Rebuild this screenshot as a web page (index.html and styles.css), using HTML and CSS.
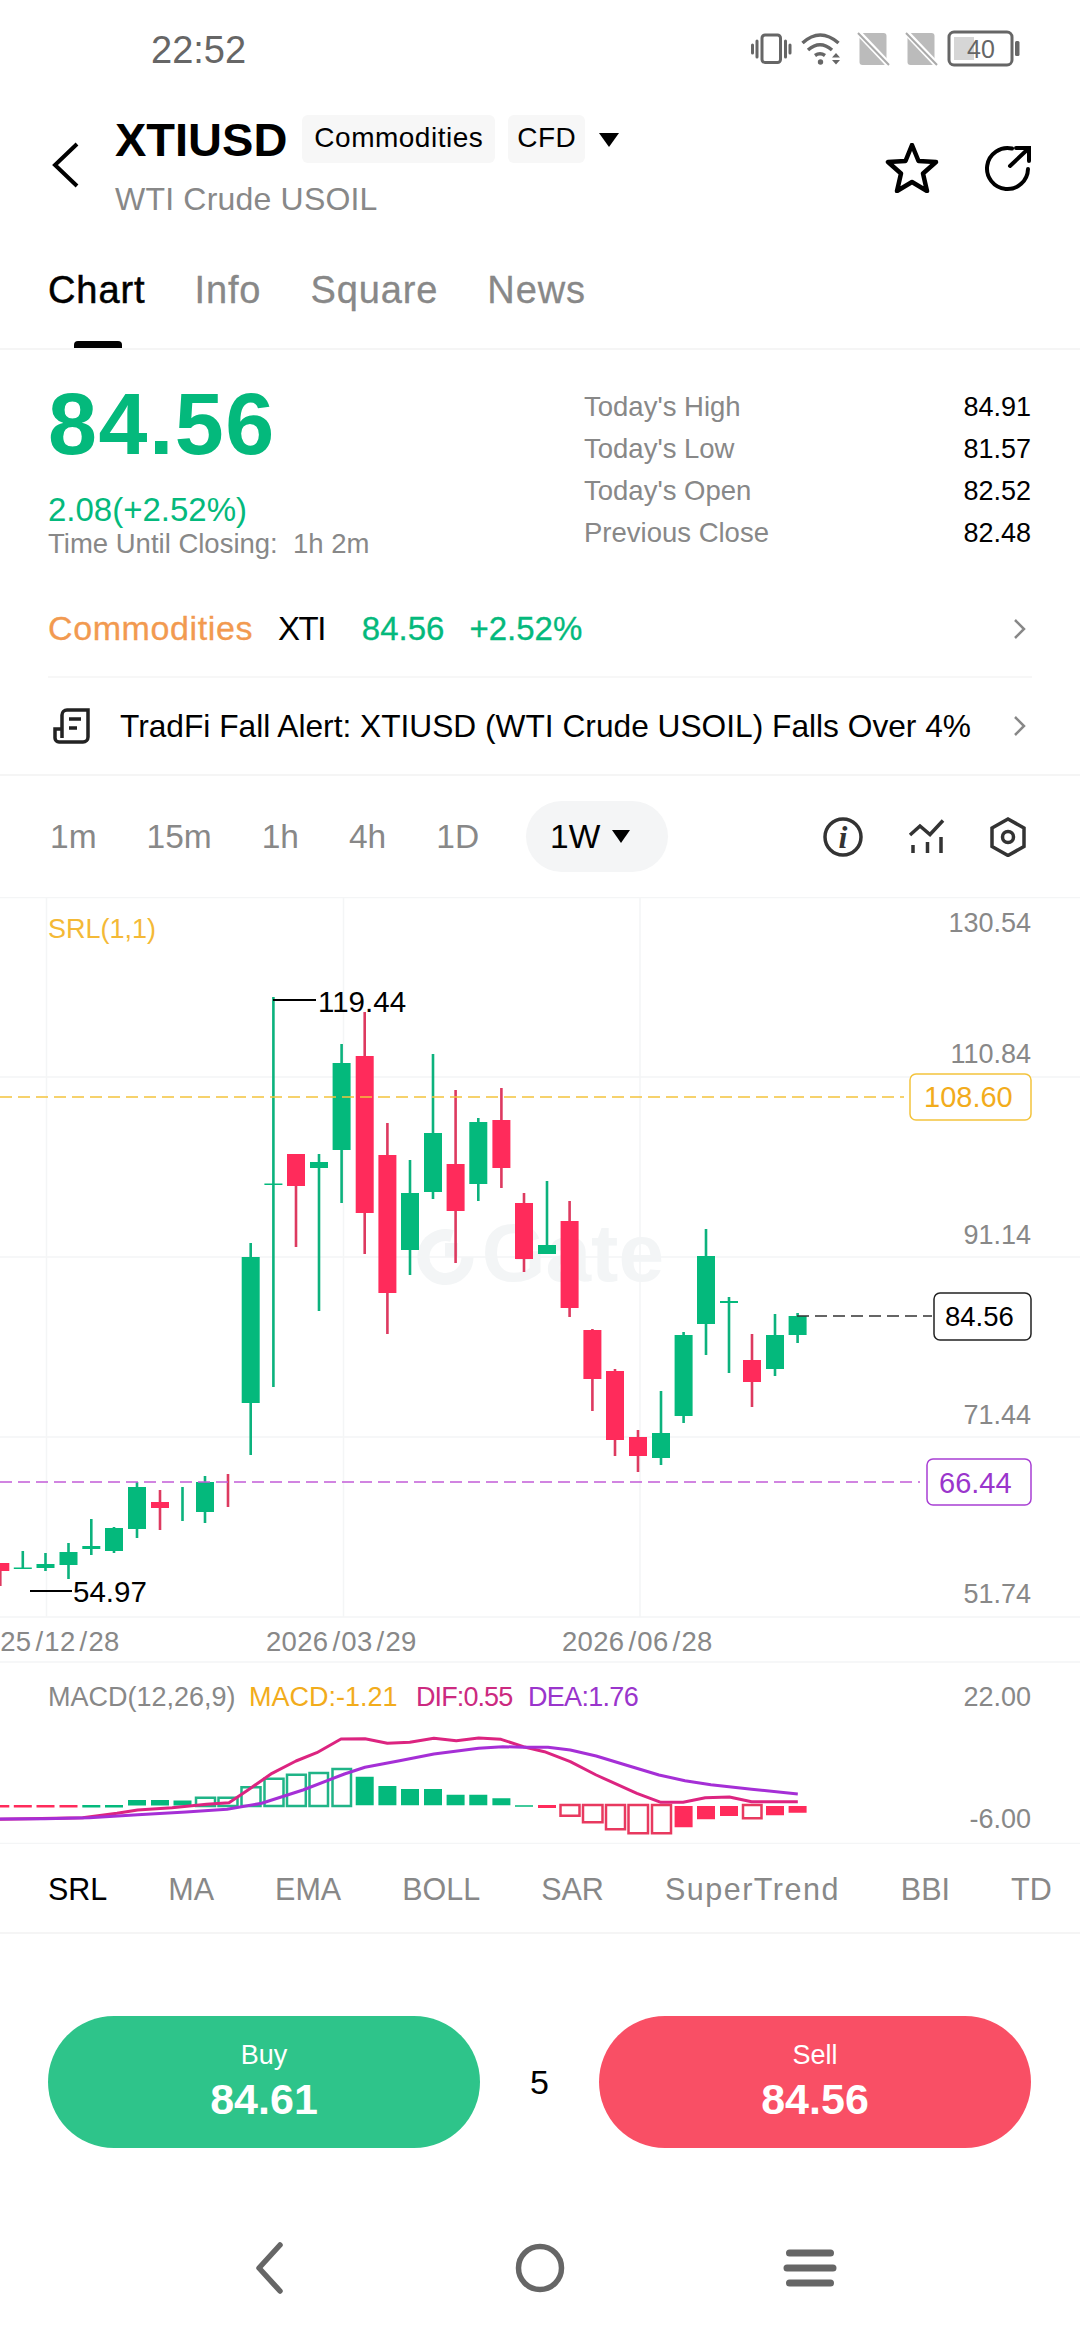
FILE: index.html
```html
<!DOCTYPE html>
<html lang="en">
  <head>
    <meta charset="UTF-8" />
    <meta name="viewport" content="width=device-width, initial-scale=1.0" />
    <title>XTIUSD</title>
    <link rel="stylesheet" href="styles.css">
  </head>
  <body>
    <div class="app">
      <!-- status bar -->
      <div class="statusBar">
        <span class="clock">22:52</span>
        <svg class="statusIcons" width="300" height="60" viewBox="0 0 300 60">
          <rect class="ic" x="22" y="15" width="18.500" height="27.500" rx="3" />
          <path class="ic" d="M17 21V37M12.500 25V33M45.500 21V37M50 25V33" />
          <path class="wifi" d="M62.500 23Q80 7 98.500 23M68 30Q80 19.500 92 30M75 35.500Q80 32 85 35.500" />
          <circle class="fillDark" cx="80.500" cy="42" r="2.700" />
          <path class="fillDark" d="M96 33L92 37.500H100ZM92 40H100L96 44.500Z" />
          <rect class="sim" x="119.500" y="13" width="27" height="32" rx="3" />
          <path class="simCut" d="M114 8L150 46" />
          <path class="simLine" d="M118 13L149 45" />
          <rect class="sim" x="167.500" y="13" width="27" height="32" rx="3" />
          <path class="simCut" d="M162 8L198 46" />
          <path class="simLine" d="M166 13L197 45" />
          <rect class="batBody" x="209" y="12" width="63" height="33" rx="5" />
          <rect class="batFill" x="214" y="17" width="20" height="23" />
          <rect class="fillDark" x="275" y="21" width="4.500" height="15" rx="1.500" />
          <text class="batText" x="241" y="37.500">40</text>
        </svg>
      </div>

      <!-- header -->
      <div class="header">
        <svg class="backIcon" width="30" height="48" viewBox="0 0 30 48">
          <path d="M27 3L5 24L27 45" />
        </svg>
        <div class="titleBlock">
          <div class="titleRow">
            <span class="symbol">XTIUSD</span>
            <span class="chip">Commodities</span>
            <span class="chip chipShort">CFD</span>
            <span class="caret"></span>
          </div>
          <div class="symbolName">WTI Crude USOIL</div>
        </div>
        <svg class="starIcon" width="54" height="50" viewBox="0 0 54 50">
          <path d="M27 2L33.500 18L51 19L38 30.500L42 48L27 39L12 48L16 30.500L3 19L20.500 18Z" />
        </svg>
        <svg class="shareIcon" width="52" height="52" viewBox="982 142 52 52">
          <path d="M1012 147.500A20.500 20.500 0 1 0 1028 168M1010 165L1028 148M1016 147H1029V160" />
        </svg>
      </div>

      <!-- tabs -->
      <div class="tabs">
        <div class="tab active">Chart</div>
        <div class="tab">Info</div>
        <div class="tab">Square</div>
        <div class="tab">News</div>
      </div>

      <!-- quote -->
      <div class="quote">
        <div class="quoteLeft">
          <div class="price">84.56</div>
          <div class="change">2.08(+2.52%)</div>
          <div class="closing">Time Until Closing:&nbsp; 1h 2m</div>
        </div>
        <div class="stats">
          <div class="statRow"><span>Today's High</span><b>84.91</b></div>
          <div class="statRow"><span>Today's Low</span><b>81.57</b></div>
          <div class="statRow"><span>Today's Open</span><b>82.52</b></div>
          <div class="statRow"><span>Previous Close</span><b>82.48</b></div>
        </div>
      </div>

      <div class="sectorRow">
        <span class="sector">Commodities</span>
        <span class="sectorCode">XTI</span>
        <span class="sectorPrice">84.56</span>
        <span class="sectorPct">+2.52%</span>
        <svg class="chevron" width="15" height="22" viewBox="0 0 15 22"><path d="M3 2L12 11L3 20" /></svg>
      </div>

      <div class="newsRow">
        <svg class="newsIcon" width="44" height="42" viewBox="50 705 44 42">
          <path d="M62 738V715a5 5 0 0 1 5-5H88V737a5 5 0 0 1-5 5H59a4 4 0 0 1-4-4V729H62M69 719H81M69 728H77" />
        </svg>
        <span class="newsText">TradFi Fall Alert: XTIUSD (WTI Crude USOIL) Falls Over 4%</span>
        <svg class="chevron" width="15" height="22" viewBox="0 0 15 22"><path d="M3 2L12 11L3 20" /></svg>
      </div>

      <!-- time frames -->
      <div class="frames">
        <span class="frame">1m</span>
        <span class="frame">15m</span>
        <span class="frame">1h</span>
        <span class="frame">4h</span>
        <span class="frame">1D</span>
        <span class="framePill">1W<span class="caret small"></span></span>
        <div class="frameIcons">
          <svg width="40" height="40" viewBox="820 816 40 40">
            <circle class="tool" cx="840" cy="836" r="18" />
            <text class="infoI" x="840" y="847">i</text>
          </svg>
          <svg width="37" height="40" viewBox="905 816 37 40">
            <path class="tool" d="M907 834L917 825L927 833.500L940 819.500M910 844V852M924.500 841V852M938 836V852" />
          </svg>
          <svg width="36" height="40" viewBox="990 816 36 40">
            <path class="tool" d="M1008 818L1024 827V845.500L1008 854.500L992 845.500V827Z" />
            <circle class="tool" cx="1008" cy="836" r="5.500" />
          </svg>
        </div>
      </div>

      <!-- chart canvas, viewBox uses page coordinates -->
      <svg class="chart" width="1080" height="947" viewBox="0 897 1080 947">
        <path class="grid" d="M0 897.500H1080M0 1077H1080M0 1257H1080M0 1437H1080M0 1617H1080M0 1662H1080M0 1843.500H1080M46.500 897V1617M343.500 897V1617M640 897V1617" />

        <path class="markRing" d="M452 1236A22 22 0 1 0 467.500 1257" />
        <path class="markDot" d="M445 1243H458V1257H445Z" />
        <text class="mark" x="664" y="1281">Gate</text>

        <path class="wick up" d="M22.800 1551V1569M45.500 1553V1571M68.500 1543V1579M91.300 1519V1555M114 1527V1553M137 1482V1538M182.500 1487V1521M205 1476V1523M250.700 1243V1455M273.400 997V1387M319 1154V1311M341.600 1044V1203M410 1160V1275M433 1054V1199M478.300 1118V1201M547 1181V1254M661 1391V1465M683.600 1332V1423M706 1229V1355M729 1297V1373M775 1314V1376M797.600 1313V1343" />
        <path class="body up" d="M22.800 1567.500V1569M45.500 1564V1568M68.500 1552V1565M91.300 1546V1549M114 1528V1551M137 1487V1529M205 1482V1512M250.700 1257V1403M273.400 1183.500V1185M319 1162V1168M341.600 1063V1150M410 1193V1250M433 1133V1192M478.300 1122V1184M547 1245V1254M661 1433V1458M683.600 1335V1416M706 1256V1324M729 1301V1303M775 1335V1369M797.600 1316V1335" />
        <path class="wick down" d="M0.300 1563V1586M160 1490V1530M228 1474V1507M296 1154V1247M364.700 1012V1254M387.400 1123V1334M455.600 1090V1263M501.400 1088V1188M524 1193V1272M569.600 1201V1317M592.400 1329V1411M615 1369V1456M638 1430V1472M752 1334V1407" />
        <path class="body down" d="M0.300 1563V1571M160 1502V1508M296 1154V1186M364.700 1056V1213M387.400 1155V1293M455.600 1164V1211M501.400 1120V1168M524 1203V1259M569.600 1221V1308M592.400 1330V1379M615 1371V1440M638 1437V1456M752 1360V1382" />

        <path class="dash yellow" d="M0 1097H904" />
        <path class="dash purple" d="M0 1482H920" />
        <path class="dash black" d="M797 1316H932" />

        <path class="leader" d="M273 1000H316M30 1591H72" />
        <text class="hiLo" x="318" y="1012">119.44</text>
        <text class="hiLo" x="73" y="1602">54.97</text>
        <text class="srl" x="48" y="938">SRL(1,1)</text>

        <text class="axis" x="1031" y="932">130.54</text>
        <text class="axis" x="1031" y="1063">110.84</text>
        <text class="axis" x="1031" y="1244">91.14</text>
        <text class="axis" x="1031" y="1424">71.44</text>
        <text class="axis" x="1031" y="1603">51.74</text>

        <rect class="tag tagYellow" x="910" y="1074" width="121" height="46" rx="6" />
        <text class="tagText yellowText" x="924" y="1107">108.60</text>
        <rect class="tag tagBlack" x="934" y="1293" width="97" height="47" rx="6" />
        <text class="tagText blackText" x="945" y="1326">84.56</text>
        <rect class="tag tagPurple" x="927" y="1459" width="104" height="46" rx="6" />
        <text class="tagText purpleText" x="939" y="1493">66.44</text>

        <text class="date" x="-31" y="1651">2025<tspan dx="4">/</tspan><tspan dx="1">12</tspan><tspan dx="4">/</tspan><tspan dx="1">28</tspan></text>
        <text class="date" x="266" y="1651">2026<tspan dx="4">/</tspan><tspan dx="1">03</tspan><tspan dx="4">/</tspan><tspan dx="1">29</tspan></text>
        <text class="date" x="562" y="1651">2026<tspan dx="4">/</tspan><tspan dx="1">06</tspan><tspan dx="4">/</tspan><tspan dx="1">28</tspan></text>

        <!-- macd -->
        <text class="macdLabel grey" x="48" y="1706">MACD(12,26,9)</text>
        <text class="macdLabel yellowText" x="249" y="1706">MACD:-1.21</text>
        <text class="macdLabel pink" x="416" y="1706">DIF:0.55</text>
        <text class="macdLabel purpleText tight" x="528" y="1706">DEA:1.76</text>
        <text class="axis" x="1031" y="1706">22.00</text>
        <text class="axis" x="1031" y="1828">-6.00</text>

        <path class="bar up" d="M91.300 1805V1807.500M114 1805V1807.500M137 1800V1805.500M160 1800V1805.500M182.500 1800.500V1805.500M364.700 1776.700V1805.300M387.400 1786V1805.300M410 1789V1805.300M433 1789V1805.300M455.600 1794.700V1805.300M478.300 1794.700V1805.300M501.400 1798.300V1805.300M524 1805.300V1806.800" />
        <path class="bar down" d="M0.300 1805V1807.500M22.800 1805V1807.500M45.500 1805V1807.500M68.500 1805V1807.500M547 1805V1808M683.600 1806V1827.300M706 1806V1819.300M729 1806V1816M775 1806V1815.300M797.600 1806V1812.700" />
        <path class="hollow up" d="M196 1797.700H215V1806H196ZM218.500 1797.700H237.500V1806H218.500ZM241.500 1787.300H260.500V1806H241.500ZM264.500 1778.700H283.500V1806H264.500ZM287 1774.700H305.800V1806H287ZM309.500 1773H328V1806H309.500ZM332.500 1769H351V1806H332.500Z" />
        <path class="hollow down" d="M560.500 1805H579.500V1815.700H560.500ZM583 1805H602.500V1822.300H583ZM606 1805H625V1829.300H606ZM628.500 1805H648V1833.300H628.500ZM652 1805H671V1833.300H652ZM743 1805H761.500V1818.300H743Z" />
        <polyline class="line pink" points="0,1819.300 82.600,1817.700 117,1813.300 137.700,1810 172,1807.700 206.600,1804.300 229,1802.700 248,1790 272,1773.300 296,1761 316.800,1752.700 341,1739 365,1738.700 387.400,1743.300 409.800,1742.300 433.900,1738.300 456.300,1740.700 478.700,1738 501,1739.300 523.400,1746.700 544.400,1751.700 570.300,1761.700 596.200,1775 636.900,1793.300 660.900,1802.300 683.100,1802.300 705.300,1797.700 729.400,1797 751.600,1801.700 797.800,1801.700" />
        <polyline class="line violet" points="0,1819 44.800,1818.700 89.500,1817.700 137.700,1814.700 186,1812 227,1809.300 261.700,1803.300 303,1790 344.400,1774 365,1767.300 399.500,1760.700 433.900,1754 478.700,1748.300 502.800,1746.700 523.400,1747.300 548,1747.300 570.300,1750 596.200,1756 625.800,1765 659,1775 685,1780.700 710.900,1784.700 751.600,1789.300 797.800,1794" />
      </svg>

      <!-- indicators -->
      <div class="indicators">
        <span class="indicator active">SRL</span>
        <span class="indicator">MA</span>
        <span class="indicator">EMA</span>
        <span class="indicator">BOLL</span>
        <span class="indicator">SAR</span>
        <span class="indicator spaced">SuperTrend</span>
        <span class="indicator">BBI</span>
        <span class="indicator">TD</span>
      </div>

      <!-- trade buttons -->
      <div class="trade">
        <div class="tradeBtn buy"><span class="btnLabel">Buy</span><span class="btnPrice">84.61</span></div>
        <div class="lots">5</div>
        <div class="tradeBtn sell"><span class="btnLabel">Sell</span><span class="btnPrice">84.56</span></div>
      </div>

      <!-- system nav -->
      <div class="navBar">
        <svg class="navIcon" width="60" height="52" viewBox="0 0 60 52"><path d="M40 3L19 26L40 49" /></svg>
        <svg class="navIcon" width="60" height="52" viewBox="0 0 60 52"><circle cx="30" cy="26" r="21.500" /></svg>
        <svg class="navIcon menu" width="60" height="52" viewBox="0 0 60 52"><path d="M9.500 11H50.500M7 26H53M9.500 41H50.500" /></svg>
      </div>
    </div>
  </body>
</html>
```

FILE: styles.css
```css
* {
  box-sizing: border-box;
}
body {
  margin: 0;
  background: #fff;
  font-family: "Liberation Sans", Arial, sans-serif;
  color: #000;
}

.app {
  width: 1080px;
  height: 2340px;
  overflow: hidden;
}

/* status bar */
.statusBar {
  display: flex;
  align-items: center;
  justify-content: space-between;
  height: 100px;
  padding: 0 40px 0 151px;
}
.clock {
  font-size: 38px;
  color: #666;
}
.statusIcons {
  display: block;
}
.ic {
  fill: none;
  stroke: #666;
  stroke-width: 3;
  stroke-linecap: round;
}
.wifi {
  fill: none;
  stroke: #666;
  stroke-width: 3.5;
}
.fillDark {
  fill: #666;
}
.sim {
  fill: #bbb;
}
.simCut {
  stroke: #fff;
  stroke-width: 6;
}
.simLine {
  stroke: #aaa;
  stroke-width: 2;
}
.batBody {
  fill: none;
  stroke: #666;
  stroke-width: 3;
}
.batFill {
  fill: #d6d6d6;
}
.batText {
  font-size: 25px;
  fill: #666;
  text-anchor: middle;
}

/* header */
.header {
  display: flex;
  align-items: center;
  height: 130px;
  padding: 0 46px 0 50px;
}
.backIcon {
  flex: none;
  margin-right: 35px;
}
.backIcon path {
  fill: none;
  stroke: #000;
  stroke-width: 4;
}
.titleBlock {
  flex: 1;
}
.titleRow {
  display: flex;
  align-items: center;
  height: 56px;
}
.symbol {
  font-size: 47px;
  font-weight: 700;
  margin-right: 15px;
}
.chip {
  background: #f7f7f7;
  border-radius: 6px;
  height: 48px;
  line-height: 46px;
  margin-top: -2px;
  padding: 0 12px;
  font-size: 28px;
  letter-spacing: 0.500px;
  margin-right: 13px;
}
.chipShort {
  padding: 0 9px;
}
.caret {
  display: inline-block;
  width: 0;
  height: 0;
  border-left: 10.500px solid transparent;
  border-right: 10.500px solid transparent;
  border-top: 14px solid #000;
  margin-left: 1px;
}
.caret.small {
  border-left-width: 9px;
  border-right-width: 9px;
  border-top-width: 13px;
  margin-left: 12px;
}
.symbolName {
  margin-top: 11px;
  font-size: 32px;
  letter-spacing: 0.200px;
  line-height: 40px;
  color: #888;
}
.starIcon path {
  fill: none;
  stroke: #000;
  stroke-width: 4.500;
  stroke-linejoin: round;
}
.starIcon {
  flex: none;
  margin: 6px 43px 0 0;
}
.shareIcon {
  flex: none;
  margin-top: 8px;
}
.shareIcon path {
  fill: none;
  stroke: #000;
  stroke-width: 4;
  stroke-linecap: round;
}

/* tabs */
.tabs {
  display: flex;
  gap: 49px;
  height: 120px;
  padding: 0 48px;
  border-bottom: 2px solid #f5f5f5;
}
.tab {
  position: relative;
  font-size: 38px;
  letter-spacing: 0.900px;
  line-height: 120px;
  color: #888;
  -webkit-text-stroke: 0.300px #888;
}
.tab.active {
  color: #000;
  -webkit-text-stroke: 0.500px #000;
}
.tab.active::after {
  content: '';
  position: absolute;
  left: 26px;
  bottom: 0;
  width: 48px;
  height: 7px;
  border-radius: 4px 4px 0 0;
  background: #000;
}

/* quote */
.quote {
  display: flex;
  justify-content: space-between;
  height: 231px;
  padding: 0 49px 0 48px;
}
.quoteLeft {
  padding-top: 29px;
}
.price {
  font-size: 88px;
  font-weight: 700;
  letter-spacing: 1.500px;
  line-height: 90px;
  color: #04b97c;
}
.change {
  margin-top: 21px;
  font-size: 33px;
  line-height: 40px;
  color: #04b97c;
}
.closing {
  font-size: 27.500px;
  line-height: 28px;
  color: #888;
}
.stats {
  width: 447px;
  padding-top: 36px;
}
.statRow {
  display: flex;
  justify-content: space-between;
  height: 42px;
  line-height: 42px;
  font-size: 27.500px;
  color: #888;
}
.statRow b {
  font-weight: 400;
  font-size: 27px;
  color: #000;
}

/* sector + news */
.sectorRow {
  display: flex;
  align-items: center;
  height: 97px;
  margin: 0 48px;
  font-size: 33px;
  border-bottom: 2px solid #f7f7f7;
}
.sector {
  color: #f29a50;
  font-size: 34px;
  letter-spacing: 0.600px;
  margin-right: 25px;
  -webkit-text-stroke: 0.300px #f29a50;
}
.sectorCode {
  letter-spacing: -1.500px;
  margin-right: 37px;
}
.sectorPrice {
  color: #04b97c;
  margin-right: 25px;
  -webkit-text-stroke: 0.300px #04b97c;
}
.sectorPct {
  color: #04b97c;
  -webkit-text-stroke: 0.300px #04b97c;
}
.chevron {
  flex: none;
  margin-left: auto;
  margin-right: 5px;
}
.chevron path {
  fill: none;
  stroke: #888;
  stroke-width: 2.500;
}
.newsRow {
  display: flex;
  align-items: center;
  height: 98px;
  padding: 0 48px;
  border-bottom: 2px solid #f5f5f5;
}
.newsIcon {
  flex: none;
  margin-left: 2px;
  margin-right: 26px;
}
.newsIcon path {
  fill: none;
  stroke: #222;
  stroke-width: 3.500;
}
.newsText {
  font-size: 31.700px;
  white-space: nowrap;
}

/* time frames */
.frames {
  display: flex;
  align-items: center;
  height: 121px;
  padding: 0 54px 0 50px;
  font-size: 33.500px;
}
.frame {
  color: #888;
  margin-right: 50px;
}
.framePill {
  display: flex;
  align-items: center;
  height: 71px;
  margin-left: -3px;
  padding: 0 38px 0 24px;
  border-radius: 36px;
  background: #f4f5f6;
  color: #000;
}
.frameIcons {
  display: flex;
  align-items: center;
  margin-left: auto;
  gap: 45px;
}
.frameIcons svg {
  display: block;
}
.tool {
  fill: none;
  stroke: #333;
  stroke-width: 3.500;
}
.infoI {
  font-family: "Liberation Serif", serif;
  font-style: italic;
  font-weight: 700;
  font-size: 32px;
  fill: #333;
  text-anchor: middle;
}

/* chart */
.chart {
  display: block;
}
.grid {
  fill: none;
  stroke: #f4f5f6;
  stroke-width: 1.500;
}
.mark {
  font-size: 82px;
  font-weight: 700;
  fill: #f3f5f6;
  text-anchor: end;
}
.markRing {
  fill: none;
  stroke: #f3f5f6;
  stroke-width: 12;
}
.markDot {
  fill: #f3f5f6;
}
.wick {
  fill: none;
  stroke-width: 2.600;
}
.wick.up {
  stroke: #0cb27d;
}
.wick.down {
  stroke: #dd3a60;
}
.body,
.bar {
  fill: none;
  stroke-width: 18;
}
.body.up,
.bar.up {
  stroke: #04b97c;
}
.body.down,
.bar.down {
  stroke: #ff2b5b;
}
.hollow {
  fill: #fff;
  stroke-width: 2.500;
}
.hollow.up {
  stroke: #20b487;
}
.hollow.down {
  stroke: #e8395f;
}
.dash {
  fill: none;
  stroke-width: 1.500;
  stroke-dasharray: 12 6;
}
.dash.yellow {
  stroke: #f3c33c;
}
.dash.purple {
  stroke: #c25cd8;
}
.dash.black {
  stroke: #333;
}
.leader {
  fill: none;
  stroke: #000;
  stroke-width: 2;
}
.hiLo {
  font-size: 29.500px;
  fill: #000;
}
.srl {
  font-size: 27px;
  fill: #f4b936;
}
.axis {
  font-size: 27px;
  fill: #888;
  text-anchor: end;
}
.tag {
  fill: #fff;
  stroke-width: 1.500;
}
.tagYellow {
  stroke: #f3c33c;
}
.tagBlack {
  stroke: #222;
}
.tagPurple {
  stroke: #a83fd4;
}
.tagText {
  font-size: 29px;
}
.yellowText {
  fill: #f2ac1c;
}
.blackText {
  fill: #000;
  font-size: 27.500px;
}
.purpleText {
  fill: #9a35cc;
}
.date {
  font-size: 27.500px;
  letter-spacing: 0.300px;
  fill: #888;
}
.macdLabel {
  font-size: 27px;
}
.macdLabel.grey {
  fill: #888;
}
.macdLabel.pink {
  fill: #cc2a80;
  letter-spacing: -0.900px;
}
.macdLabel.tight {
  letter-spacing: -0.700px;
}
.line {
  fill: none;
  stroke-width: 3;
  stroke-linejoin: round;
}
.line.pink {
  stroke: #dc2480;
}
.line.violet {
  stroke: #a52fd6;
}

/* indicators */
.indicators {
  display: flex;
  align-items: center;
  gap: 61px;
  height: 90px;
  padding: 2px 0 0 48px;
  font-size: 30.500px;
  color: #888;
  white-space: nowrap;
  border-bottom: 2px solid #f5f5f5;
}
.indicator.active {
  color: #000;
}
.indicator.spaced {
  letter-spacing: 1.500px;
}

/* trade */
.trade {
  display: flex;
  align-items: center;
  height: 132px;
  margin: 82px 49px 0 48px;
}
.tradeBtn {
  display: flex;
  flex-direction: column;
  align-items: center;
  flex: none;
  width: 432px;
  height: 132px;
  border-radius: 66px;
  color: #fff;
  padding-top: 22px;
}
.buy {
  background: #2ec48a;
}
.sell {
  background: #f94f65;
}
.btnLabel {
  font-size: 27px;
  line-height: 34px;
}
.btnPrice {
  font-size: 43px;
  font-weight: 700;
  line-height: 50px;
  margin-top: 2px;
}
.lots {
  flex: 1;
  text-align: center;
  font-size: 34px;
}

/* system nav */
.navBar {
  display: grid;
  grid-template-columns: repeat(3, 270px);
  justify-content: center;
  justify-items: center;
  padding-top: 94px;
}
.navIcon {
  display: block;
  fill: none;
  stroke: #666;
  stroke-width: 5.500;
  stroke-linecap: round;
  stroke-linejoin: round;
}
.navIcon.menu {
  stroke-width: 7;
}
```
